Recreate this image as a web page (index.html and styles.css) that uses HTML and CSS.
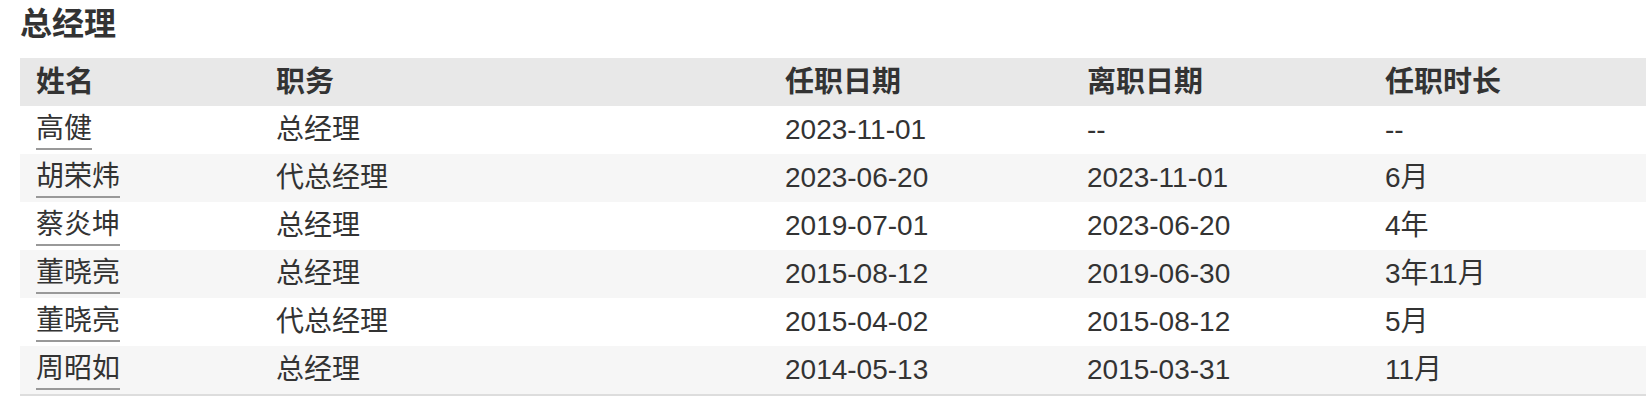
FILE: index.html
```html
<!DOCTYPE html>
<html lang="zh-CN">
<head>
<meta charset="utf-8">
<title>总经理</title>
<link rel="stylesheet" href="styles.css">
</head>
<body>
<section class="section">
  <h2 class="section-title">总经理</h2>
  <table class="tenure-table">
    <colgroup>
      <col class="col-name">
      <col class="col-post">
      <col class="col-start">
      <col class="col-end">
      <col class="col-dur">
    </colgroup>
    <thead>
      <tr><th>姓名</th><th>职务</th><th>任职日期</th><th>离职日期</th><th>任职时长</th></tr>
    </thead>
    <tbody>
      <tr><td><a class="person" href="#">高健</a></td><td>总经理</td><td>2023-11-01</td><td>--</td><td>--</td></tr>
      <tr><td><a class="person" href="#">胡荣炜</a></td><td>代总经理</td><td>2023-06-20</td><td>2023-11-01</td><td>6月</td></tr>
      <tr><td><a class="person" href="#">蔡炎坤</a></td><td>总经理</td><td>2019-07-01</td><td>2023-06-20</td><td>4年</td></tr>
      <tr><td><a class="person" href="#">董晓亮</a></td><td>总经理</td><td>2015-08-12</td><td>2019-06-30</td><td>3年11月</td></tr>
      <tr><td><a class="person" href="#">董晓亮</a></td><td>代总经理</td><td>2015-04-02</td><td>2015-08-12</td><td>5月</td></tr>
      <tr><td><a class="person" href="#">周昭如</a></td><td>总经理</td><td>2014-05-13</td><td>2015-03-31</td><td>11月</td></tr>
    </tbody>
  </table>
</section>
</body>
</html>
```
FILE: styles.css
```css
html, body {
  margin: 0;
  padding: 0;
  background: #ffffff;
}
body {
  font-family: "Liberation Sans", "Noto Sans CJK SC", sans-serif;
  color: #333333;
}
.section {
  padding-left: 20px;
}
.section-title {
  margin: 0 0 10px 0;
  font-size: 32px;
  line-height: 48px;
  font-weight: bold;
  color: #333333;
}
.tenure-table {
  width: 100%;
  border-collapse: collapse;
  table-layout: fixed;
  font-size: 28px;
}
.col-name { width: 240px; }
.col-post { width: 509px; }
.col-start { width: 302px; }
.col-end { width: 298px; }
.col-dur { width: auto; }
.tenure-table th,
.tenure-table td {
  height: 48px;
  padding: 0 16px;
  text-align: left;
  vertical-align: middle;
  line-height: 38px;
  white-space: nowrap;
}
.tenure-table th {
  background: #e8e8e8;
  font-weight: bold;
  font-size: 29px;
}
.tenure-table tbody tr:nth-child(even) td {
  background: #f6f6f6;
}
.tenure-table tbody tr:last-child td {
  border-bottom: 2px solid #dddddd;
}
.person {
  display: inline-block;
  color: #333333;
  text-decoration: none;
  line-height: 38px;
  border-bottom: 2px solid #999999;
}
```
